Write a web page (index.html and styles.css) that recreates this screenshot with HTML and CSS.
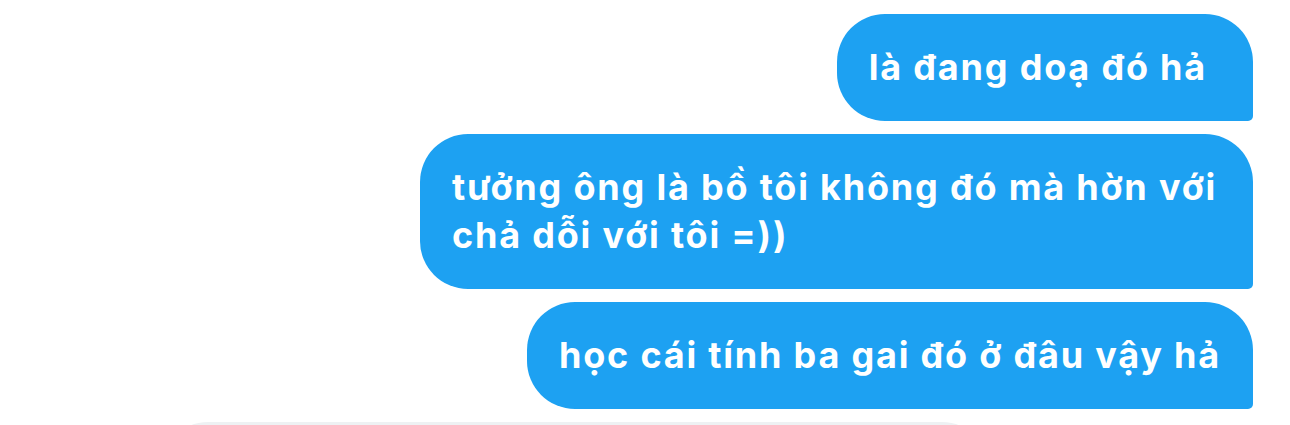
FILE: index.html
```html
<!DOCTYPE html>
<html>
<head>
  <meta name="viewport" content="width=device-width, initial-scale=1">
  <link rel="stylesheet" href="styles.css">
</head>
<body>

  <div class="thread">
    <div class="msg sent short">là đang doạ đó hả</div>
    <div class="msg sent">tưởng ông là bồ tôi không đó mà hờn với chả dỗi với tôi =))</div>
    <div class="msg sent">học cái tính ba gai đó ở đâu vậy hả</div>
    <div class="msg received">&nbsp;</div>
  </div>

</body>
</html>
```

FILE: styles.css
```css
html {
  background-color: #ffffff;
}

body {
  margin: 0;
  font-family: Inter, "Noto Sans", sans-serif;
}

.thread {
  display: flex;
  flex-direction: column;
  gap: 13px;
  padding: 14px 37px 0 0;
}

.msg {
  max-width: 769px;
  padding: 29px 32px 30px 32px;
  font-size: 36px;
  font-weight: 700;
  letter-spacing: 1.8px;
  line-height: 48px;
  border-radius: 48px;
}

.sent {
  align-self: flex-end;
  background-color: #1da1f2;
  color: white;
  border-bottom-right-radius: 5px;
}

.short {
  padding-right: 46px;
}

.received {
  align-self: flex-start;
  margin-left: 160px;
  width: 830px;
  box-sizing: border-box;
  max-width: none;
  background-color: #eef1f3;
  border-bottom-left-radius: 5px;
}
```
